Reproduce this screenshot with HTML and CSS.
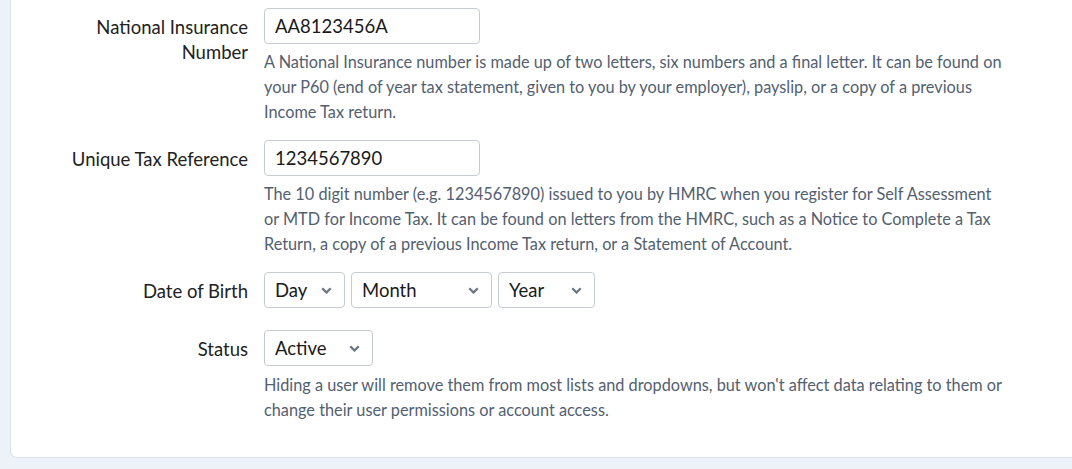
FILE: index.html
```html
<!DOCTYPE html>
<html lang="en">
<head>
  <meta charset="UTF-8" />
  <meta name="viewport" content="width=device-width, initial-scale=1" />
  <title>User details</title>
  <link rel="stylesheet" href="styles.css">
</head>
<body>

  <div class="card">
    <!-- NI number -->
    <div class="field">
      <label class="field-label" for="ni">National Insurance Number</label>
      <div class="field-body">
        <input class="text-input" id="ni" type="text" value="AA8123456A">
        <p class="help">A National Insurance number is made up of two letters, six numbers and a final letter. It can be found on your P60 (end of year tax statement, given to you by your employer), payslip, or a copy of a previous Income Tax return.</p>
      </div>
    </div>

    <!-- UTR -->
    <div class="field">
      <label class="field-label" for="utr">Unique Tax Reference</label>
      <div class="field-body">
        <input class="text-input" id="utr" type="text" value="1234567890">
        <p class="help">The 10 digit number (e.g. 1234567890) issued to you by HMRC when you register for Self Assessment or MTD for Income Tax. It can be found on letters from the HMRC, such as a Notice to Complete a Tax Return, a copy of a previous Income Tax return, or a Statement of Account.</p>
      </div>
    </div>

    <!-- DOB -->
    <div class="field field-dob">
      <label class="field-label">Date of Birth</label>
      <div class="field-body selects">
        <select class="select select-day"><option>Day</option></select>
        <select class="select select-month"><option>Month</option></select>
        <select class="select select-year"><option>Year</option></select>
      </div>
    </div>

    <!-- Status -->
    <div class="field field-last">
      <label class="field-label" for="status">Status</label>
      <div class="field-body">
        <select class="select select-status" id="status"><option>Active</option><option>Hidden</option></select>
        <p class="help help-status">Hiding a user will remove them from most lists and dropdowns, but won't affect data relating to them or change their user permissions or account access.</p>
      </div>
    </div>
  </div>

</body>
</html>
```

FILE: styles.css
```css
body {
  font-family: 'Lato', sans-serif;
  margin: 0;
  background-color: #edf2f9;
  color: #222;
}

.card {
  margin-left: 10px;
  background-color: #fff;
  border: 1px solid #dde2ea;
  border-top: none;
  border-right: none;
  border-radius: 0 0 0 7px;
  padding: 8px 0 35px;
}

.field {
  display: grid;
  grid-template-columns: 237px 1fr;
  column-gap: 16px;
  margin-bottom: 16px;
}

.field-dob {
  margin-bottom: 22px;
}

.field-last {
  margin-bottom: 0;
}

.field-label {
  padding: 7px 0 0 40px;
  text-align: right;
  font-size: 18.5px;
  line-height: 25px;
  color: #222;
}

.text-input {
  box-sizing: border-box;
  width: 216px;
  height: 36px;
  padding: 0 10px;
  border: 1px solid #c7ccd4;
  border-radius: 4px;
  font-family: inherit;
  font-size: 18.5px;
  color: #1a1a1a;
}

.help {
  margin: 5px 0 0;
  max-width: 745px;
  font-size: 16.3px;
  line-height: 25px;
  color: #536070;
}

.help-status {
  margin-top: 6px;
}

.selects {
  display: flex;
  gap: 6px;
}

.select {
  box-sizing: border-box;
  height: 36px;
  padding: 0 30px 0 10px;
  border: 1px solid #c7ccd4;
  border-radius: 4px;
  background: #fff url("data:image/svg+xml,%3Csvg xmlns='http://www.w3.org/2000/svg' width='11' height='7' viewBox='0 0 11 7'%3E%3Cpath d='M1.3 1.3l4.2 4.2 4.2-4.2' fill='none' stroke='%236b7684' stroke-width='2.3'/%3E%3C/svg%3E") no-repeat right 12px center;
  appearance: none;
  -webkit-appearance: none;
  font-family: inherit;
  font-size: 18.5px;
  color: #1a1a1a;
}

.select-day { width: 81px; }
.select-month { width: 141px; }
.select-year { width: 97px; }
.select-status { width: 109px; }
```
